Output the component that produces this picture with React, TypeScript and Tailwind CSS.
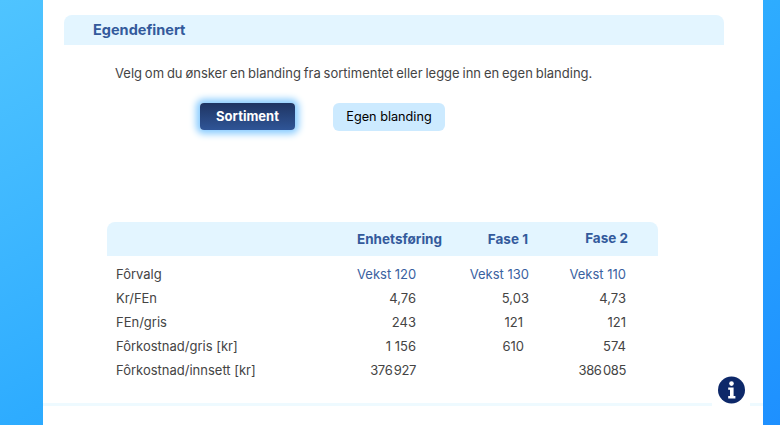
const rows = [
  { label: 'Fôrvalg', a: 'Vekst 120', b: 'Vekst 130', c: 'Vekst 110', blue: true },
  { label: 'Kr/FEn', a: '4,76', b: '5,03', c: '4,73' },
  { label: 'FEn/gris', a: '243', b: '121', c: '121', bPad: 'pr-[6px]' },
  { label: 'Fôrkostnad/gris [kr]', a: '1 156', b: '610', c: '574', bPad: 'pr-[5px]' },
  { label: 'Fôrkostnad/innsett [kr]', a: '376 927', b: '', c: '386 085', tight: true },
];

function InfoIcon() {
  return (
    <svg width="27" height="28" viewBox="0 0 27 28">
      <circle cx="13.5" cy="14" r="13.5" fill="#0d2869" />
      <circle cx="13.5" cy="7.6" r="2.3" fill="#fff" />
      <path d="M10.2 11.4h5.4v8.6h1.8v2.4h-7.2V20h1.8v-6.2h-1.8z" fill="#fff" />
    </svg>
  );
}

export default function App() {
  return (
    <div className="h-[425px] w-[780px] overflow-hidden bg-gradient-to-br from-[#4fc4ff] via-[#2eacff] via-50% to-[#1e90ff] pl-[43px] pr-[17px] font-['Inter',sans-serif] text-[13px] text-[#444]">
      <div className="relative flex h-full flex-col bg-white pt-[15px]">
        {/* Section header */}
        <div className="ml-[21px] mr-[39px] flex h-[30px] items-center rounded-t-lg bg-[#e3f5ff] pl-[29px]">
          <h2 className="text-[14.5px] font-bold text-[#335a9c]">Egendefinert</h2>
        </div>

        <p className="ml-[72px] mt-[20px] h-[16px] leading-[16px] [word-spacing:-0.8px]">
          Velg om du ønsker en blanding fra sortimentet eller legge inn en egen blanding.
        </p>

        {/* Choice buttons */}
        <div className="ml-[157px] mt-[22px] flex items-start gap-[38px]">
          <button className="h-[27px] w-[95px] rounded-[4px] bg-gradient-to-b from-[#1f3563] to-[#2f5597] font-bold text-white shadow-[0_0_7px_4px_#8bcdff]">
            Sortiment
          </button>
          <button className="h-[28px] w-[112px] rounded-md bg-[#cceaff] text-[12.7px] text-black">Egen blanding</button>
        </div>

        {/* Result table */}
        <div className="ml-[64px] mr-[105px] mt-[91px]">
          <div className="grid h-[34px] grid-cols-[250px_85px_86px_100px] items-center rounded-t-lg bg-[#e3f5ff] text-[13.5px] font-bold text-[#335a9c]">
            <div />
            <div className="whitespace-nowrap text-right">Enhetsføring</div>
            <div className="text-right">Fase 1</div>
            <div className="-translate-y-px text-right">Fase 2</div>
          </div>
          <div className="mt-[7px]">
            {rows.map((row) => (
              <div key={row.label} className="grid h-[24px] grid-cols-[241px_85px_87px_99px] items-center whitespace-nowrap pl-[9px]">
                <div>{row.label}</div>
                <div className={`pr-[26px] text-right ${row.blue ? 'text-[#3a619f]' : ''} ${row.tight ? 'tracking-[-0.35px] [word-spacing:-2px]' : ''}`}>{row.a}</div>
                <div className={`text-right ${row.blue ? 'text-[#3a619f]' : ''} ${row.bPad ?? ''}`}>{row.b}</div>
                <div className={`pr-[2px] text-right ${row.blue ? 'text-[#3a619f]' : ''} ${row.tight ? 'tracking-[-0.35px] [word-spacing:-2px]' : ''}`}>{row.c}</div>
              </div>
            ))}
          </div>
        </div>

        {/* Bottom rule */}
        <div className="mt-[20px] h-[3px] w-full bg-[#eefaff]" />

        <div className="absolute left-[669px] top-[370px] flex h-[40px] w-[38px] items-center justify-center bg-white">
          <InfoIcon />
        </div>
      </div>
    </div>
  );
}
